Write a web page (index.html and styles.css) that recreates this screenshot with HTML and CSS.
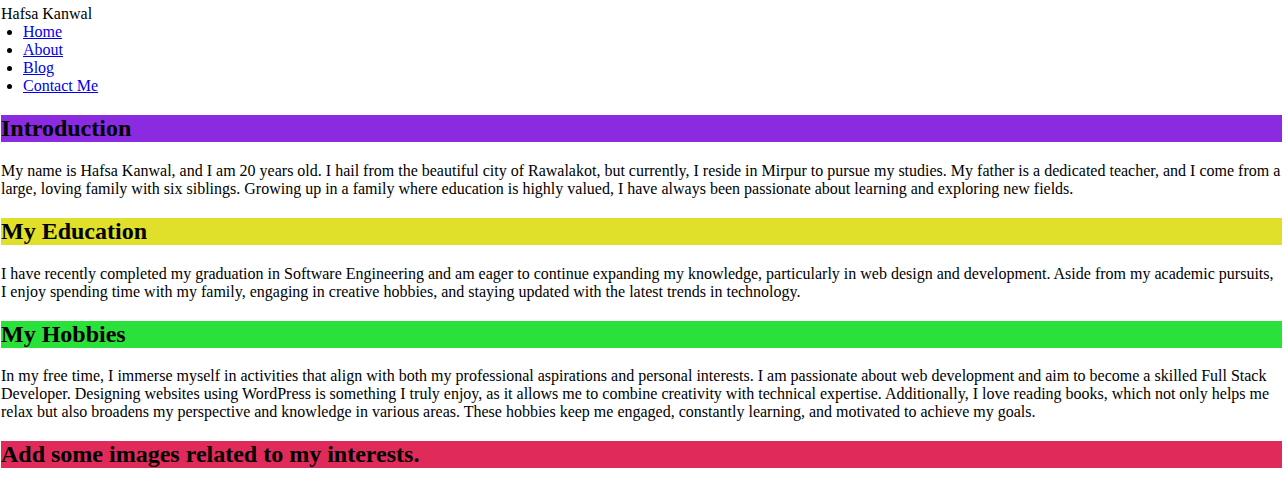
FILE: index.html
```html
<!DOCTYPE html>
<html lang="en">
<head>
<meta charset="utf-8">
<title>Hafsa Kanwal</title>
<link rel="stylesheet" href="styles.css">
</head>
<body>
<header class="site-header">
  <div class="brand">Hafsa Kanwal</div>
  <ul class="nav">
    <li><a href="#">Home</a></li>
    <li><a href="#">About</a></li>
    <li><a href="#">Blog</a></li>
    <li><a href="#">Contact Me</a></li>
  </ul>
</header>
<main>
  <h2 class="section-title intro">Introduction</h2>
  <p>My name is Hafsa Kanwal, and I am 20 years old. I hail from the beautiful city of Rawalakot, but currently, I reside in Mirpur to pursue my studies. My father is a dedicated teacher, and I come from a large, loving family with six siblings. Growing up in a family where education is highly valued, I have always been passionate about learning and exploring new fields.</p>
  <h2 class="section-title education">My Education</h2>
  <p>I have recently completed my graduation in Software Engineering and am eager to continue expanding my knowledge, particularly in web design and development. Aside from my academic pursuits, I enjoy spending time with my family, engaging in creative hobbies, and staying updated with the latest trends in technology.</p>
  <h2 class="section-title hobbies">My Hobbies</h2>
  <p>In my free time, I immerse myself in activities that align with both my professional aspirations and personal interests. I am passionate about web development and aim to become a skilled Full Stack Developer. Designing websites using WordPress is something I truly enjoy, as it allows me to combine creativity with technical expertise. Additionally, I love reading books, which not only helps me relax but also broadens my perspective and knowledge in various areas. These hobbies keep me engaged, constantly learning, and motivated to achieve my goals.</p>
  <h2 class="section-title images">Add some images related to my interests.</h2>
</main>
</body>
</html>
```

FILE: styles.css
```css
body {
  margin: 5px 6px 8px 1px;
  font-family: "Liberation Serif", "Times New Roman", serif;
  font-size: 16px;
  color: #000;
}

.nav {
  margin: 0;
  padding-left: 22px;
}

.nav a {
  color: #0000ee;
}

.section-title {
  font-size: 24px;
  font-weight: bold;
  margin: 19.92px 0;
}

.intro { background: #8a2be2; }
.education { background: #e0e02a; }
.hobbies { background: #2ae03a; }
.images { background: #e02a5a; }

p {
  margin: 16px 0;
}
```
